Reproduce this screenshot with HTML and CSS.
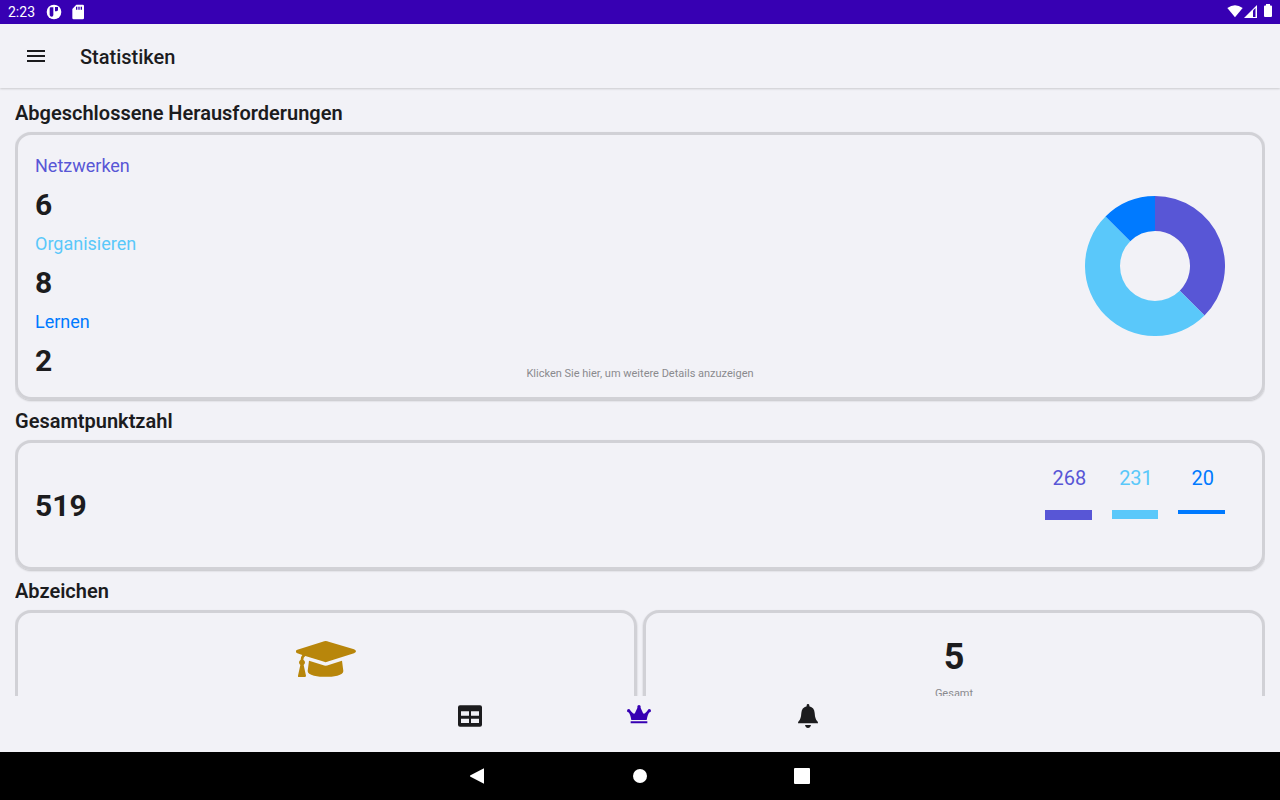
FILE: index.html
```html
<!DOCTYPE html>
<html lang="de">
<head>
<meta charset="utf-8">
<meta name="viewport" content="width=device-width, initial-scale=1">
<title>Statistiken</title>
<link rel="stylesheet" href="styles.css">
</head>
<body>
<div class="status-bar">
  <div class="status-group">
    <span class="clock">2:23</span>
    <svg class="status-icon" viewBox="0 0 48 48" aria-hidden="true"><circle cx="24" cy="24" r="22" fill="#fff"/><path d="M11 14q0-4 4-4h7v23q0 5-5 5t-6-5zM27 9h9v8q0 5-9 5z" fill="#3700b3"/></svg>
    <svg class="status-icon" viewBox="0 0 48 48" aria-hidden="true"><path d="M19 2h19q4 0 4 4v36q0 4-4 4H11q-4 0-4-4V15z" fill="#fff"/><path d="M18 8h4v9h-4zm7 0h4v9h-4zm7 0h4v9h-4z" fill="#3700b3"/></svg>
  </div>
  <div class="status-group tight">
    <svg class="status-icon" viewBox="0 0 48 48" aria-hidden="true"><path d="M1 12Q24-5 47 12L24 40z" fill="#fff"/></svg>
    <svg class="signal-icon" viewBox="0 0 14 16" aria-hidden="true"><path d="M0 14 13 1v13z" fill="#fff"/><path d="M9 6.500 11.500 4v9H9z" fill="#3700b3"/></svg>
    <svg class="battery-icon" viewBox="0 0 8 16" aria-hidden="true"><path d="M2 0h4v1.500h1q1 0 1 1V12q0 1-1 1H1q-1 0-1-1V2.500q0-1 1-1h1z" fill="#fff"/></svg>
  </div>
</div>

<header class="toolbar">
  <button class="menu-button" type="button" aria-label="Menü">
    <svg viewBox="0 0 24 24" aria-hidden="true"><path d="M3 6h18v2H3zM3 11h18v2H3zM3 16h18v2H3z" fill="#1c1c1e"/></svg>
  </button>
  <h1 class="title">Statistiken</h1>
</header>

<main class="content">
  <h2 class="section-title">Abgeschlossene Herausforderungen</h2>
  <section class="card challenges">
    <dl class="totals">
      <dt class="networking">Netzwerken</dt><dd>6</dd>
      <dt class="organising">Organisieren</dt><dd>8</dd>
      <dt class="learning">Lernen</dt><dd>2</dd>
    </dl>
    <a class="hint" href="#details">Klicken Sie hier, um weitere Details anzuzeigen</a>
    <svg class="donut" viewBox="-70 -70 140 140" role="img" aria-label="Netzwerken 6, Organisieren 8, Lernen 2">
      <path d="M0-70A70 70 0 0 1 49.500 49.500L24.750 24.750A35 35 0 0 0 0-35z" fill="#5856d6"/>
      <path d="M49.500 49.500A70 70 0 0 1-49.500-49.500L-24.750-24.750A35 35 0 0 0 24.750 24.750z" fill="#5ac8fa"/>
      <path d="M-49.500-49.500A70 70 0 0 1 0-70V-35A35 35 0 0 0-24.750-24.750z" fill="#007aff"/>
    </svg>
  </section>

  <h2 class="section-title">Gesamtpunktzahl</h2>
  <section class="card score">
    <strong class="score-total">519</strong>
    <div class="bars">
      <div class="bar-item networking"><span>268</span><div class="bar" style="height:10px"></div></div>
      <div class="bar-item organising"><span>231</span><div class="bar" style="height:9px"></div></div>
      <div class="bar-item learning"><span>20</span><div class="bar" style="height:4px"></div></div>
    </div>
  </section>

  <h2 class="section-title">Abzeichen</h2>
  <div class="badges">
    <section class="card badge">
      <svg class="cap" viewBox="0 0 180 108" role="img" aria-label="Abzeichen"><g fill="#b8860b"><path d="M80 2Q89-2 98 2L174 25Q186 31 174 37L98 61Q89 66 80 61L28 45Q22 49 22 56Q27 59 27 64Q27 69 23 72L30 104Q30 108 26 108H9Q5 108 6 104L13 72Q9 69 9 64Q9 59 14 56Q14 47 19 42L4 37Q-6 31 4 26z"/><path d="M39 59 80 72Q89 76 98 72L138 59 142 90Q142 99 124 104Q89 111 54 104Q35 99 35 90z"/></g></svg>
    </section>
    <section class="card badge">
      <strong class="badge-count">5</strong>
      <span class="caption">Gesamt</span>
    </section>
  </div>
</main>

<nav class="tabs" aria-label="Hauptnavigation">
  <a href="#uebersicht" aria-label="Übersicht"><svg viewBox="0 0 72 72" aria-hidden="true"><path fill-rule="evenodd" d="M6 4h60q6 0 6 6v52q0 6-6 6H6q-6 0-6-6V10q0-6 6-6zM9 22v13h24V22zm30 0v13h24V22zM9 44v13h24V44zm30 0v13h24V44z" fill="#1c1c1e"/></svg></a>
  <a href="#statistiken" aria-label="Statistiken" aria-current="page"><svg viewBox="0 0 72 72" aria-hidden="true"><g fill="#3700b3"><circle cx="36" cy="8" r="5"/><circle cx="5" cy="20" r="5"/><circle cx="67" cy="20" r="5"/><path d="M32 10h8l8 17q2 4 6 1l9-9 5 5q-6 6-9 24H13Q10 30 4 24l5-5 9 9q4 3 6-1zM11 52h50v6H11z"/></g></svg></a>
  <a href="#mitteilungen" aria-label="Mitteilungen"><svg viewBox="0 0 72 72" aria-hidden="true"><path d="M32 4q0-4 4-4t4 4v3Q55 11 56 27q1 18 8 25 2 2 2 6H6q0-4 2-6 7-7 8-25Q17 11 32 7zM27 63h18q-2 9-9 9t-9-9z" fill="#1c1c1e"/></svg></a>
</nav>

<nav class="system-nav" aria-label="System">
  <button type="button" aria-label="Zurück"><svg viewBox="0 0 16 16" aria-hidden="true"><path d="M13.500.5Q14-.1 14 1v14q0 1.100-.5.500L.5 8.800Q-.7 8 .5 7.200z" fill="#fff"/></svg></button>
  <button type="button" aria-label="Startseite"><svg viewBox="0 0 16 16" aria-hidden="true"><circle cx="8" cy="8" r="7" fill="#fff"/></svg></button>
  <button type="button" aria-label="Letzte Apps"><svg viewBox="0 0 16 16" aria-hidden="true"><rect width="16" height="16" rx="1" fill="#fff"/></svg></button>
</nav>
</body>
</html>
```

FILE: styles.css
```css
* {
  box-sizing: border-box;
}

body {
  display: flex;
  flex-direction: column;
  height: 100vh;
  margin: 0;
  overflow: hidden;
  background: #f2f2f7;
  color: #1c1c1e;
  font-family: Roboto, "Noto Sans", sans-serif;
}

button {
  padding: 0;
  border: 0;
  background: none;
}

svg {
  display: block;
}

.status-bar {
  display: flex;
  flex: none;
  align-items: center;
  justify-content: space-between;
  height: 24px;
  padding: 0 8px;
  background: #3700b3;
  color: #fff;
  font-size: 14px;
}

.status-group {
  display: flex;
  align-items: center;
  gap: 8px;
}

.status-group.tight {
  gap: 1px;
}

.clock {
  margin-right: 3px;
}

.status-icon {
  width: 16px;
  height: 16px;
}

.signal-icon {
  width: 14px;
  height: 16px;
}

.battery-icon {
  width: 8px;
  height: 16px;
  margin-left: 5px;
}

.toolbar {
  display: flex;
  flex: none;
  align-items: center;
  gap: 32px;
  height: 64px;
  padding: 0 24px;
  box-shadow: 0 1px 2px rgba(0, 0, 0, 0.16);
}

.menu-button svg {
  width: 24px;
  height: 24px;
}

.title {
  margin: 0;
  padding-top: 2px;
  font-size: 20px;
  font-weight: 500;
  line-height: 28px;
}

.content {
  flex: 1;
  min-height: 0;
  margin: 0 15px;
  padding-top: 4px;
  overflow: hidden;
}

.section-title {
  margin: 0;
  padding-top: 2px;
  font-size: 20px;
  font-weight: 600;
  line-height: 38px;
}

.card {
  border: 3px solid #d1d1d6;
  border-radius: 16px;
  box-shadow: 0 1px 2px rgba(0, 0, 0, 0.2);
}

.challenges {
  display: grid;
  grid-template-columns: 1fr auto 1fr;
  align-items: center;
  padding: 14px 17px;
}

.totals {
  margin: 0;
}

.totals dt {
  font-size: 18px;
  line-height: 34px;
}

.totals dd {
  margin: 0;
  font-size: 30px;
  font-weight: 700;
  line-height: 44px;
}

.networking {
  color: #5856d6;
}

.organising {
  color: #5ac8fa;
}

.learning {
  color: #007aff;
}

.hint {
  align-self: end;
  color: #8a8a8e;
  font-size: 11px;
  line-height: 18px;
  text-decoration: none;
}

.donut {
  justify-self: end;
  width: 140px;
  height: 140px;
  margin-right: 20px;
}

.score {
  display: flex;
  align-items: center;
  justify-content: space-between;
  height: 130px;
  padding: 0 37px 0 17px;
}

.score-total {
  font-size: 30px;
}

.bars {
  display: grid;
  grid-template-columns: repeat(3, 1fr);
  align-self: start;
  gap: 20px;
  width: 180px;
  padding-top: 19px;
}

.bar-item {
  font-size: 20px;
  line-height: 32px;
  text-align: center;
}

.bar-item span {
  display: block;
  padding-left: 2px;
}

.bar {
  margin-top: 16px;
  background: currentColor;
}

.badges {
  display: grid;
  grid-template-columns: 1fr 1fr;
  gap: 6px;
}

.badge {
  display: flex;
  flex-direction: column;
  align-items: center;
  height: 130px;
  padding-top: 24px;
}

.cap {
  width: 60px;
  height: 36px;
  margin-top: 4px;
}

.badge-count {
  font-size: 36px;
  line-height: 40px;
}

.caption {
  margin-top: 8px;
  color: #8a8a8e;
  font-size: 11px;
  line-height: 18px;
}

.tabs {
  display: flex;
  flex: none;
  justify-content: center;
  height: 56px;
  padding-right: 2px;
}

.tabs a {
  display: flex;
  justify-content: center;
  width: 169px;
  padding-top: 8px;
}

.tabs svg {
  width: 24px;
  height: 24px;
}

.system-nav {
  display: flex;
  flex: none;
  justify-content: center;
  height: 48px;
  background: #000;
}

.system-nav button {
  display: flex;
  align-items: center;
  justify-content: center;
  width: 162px;
}

.system-nav svg {
  width: 16px;
  height: 16px;
}
```
